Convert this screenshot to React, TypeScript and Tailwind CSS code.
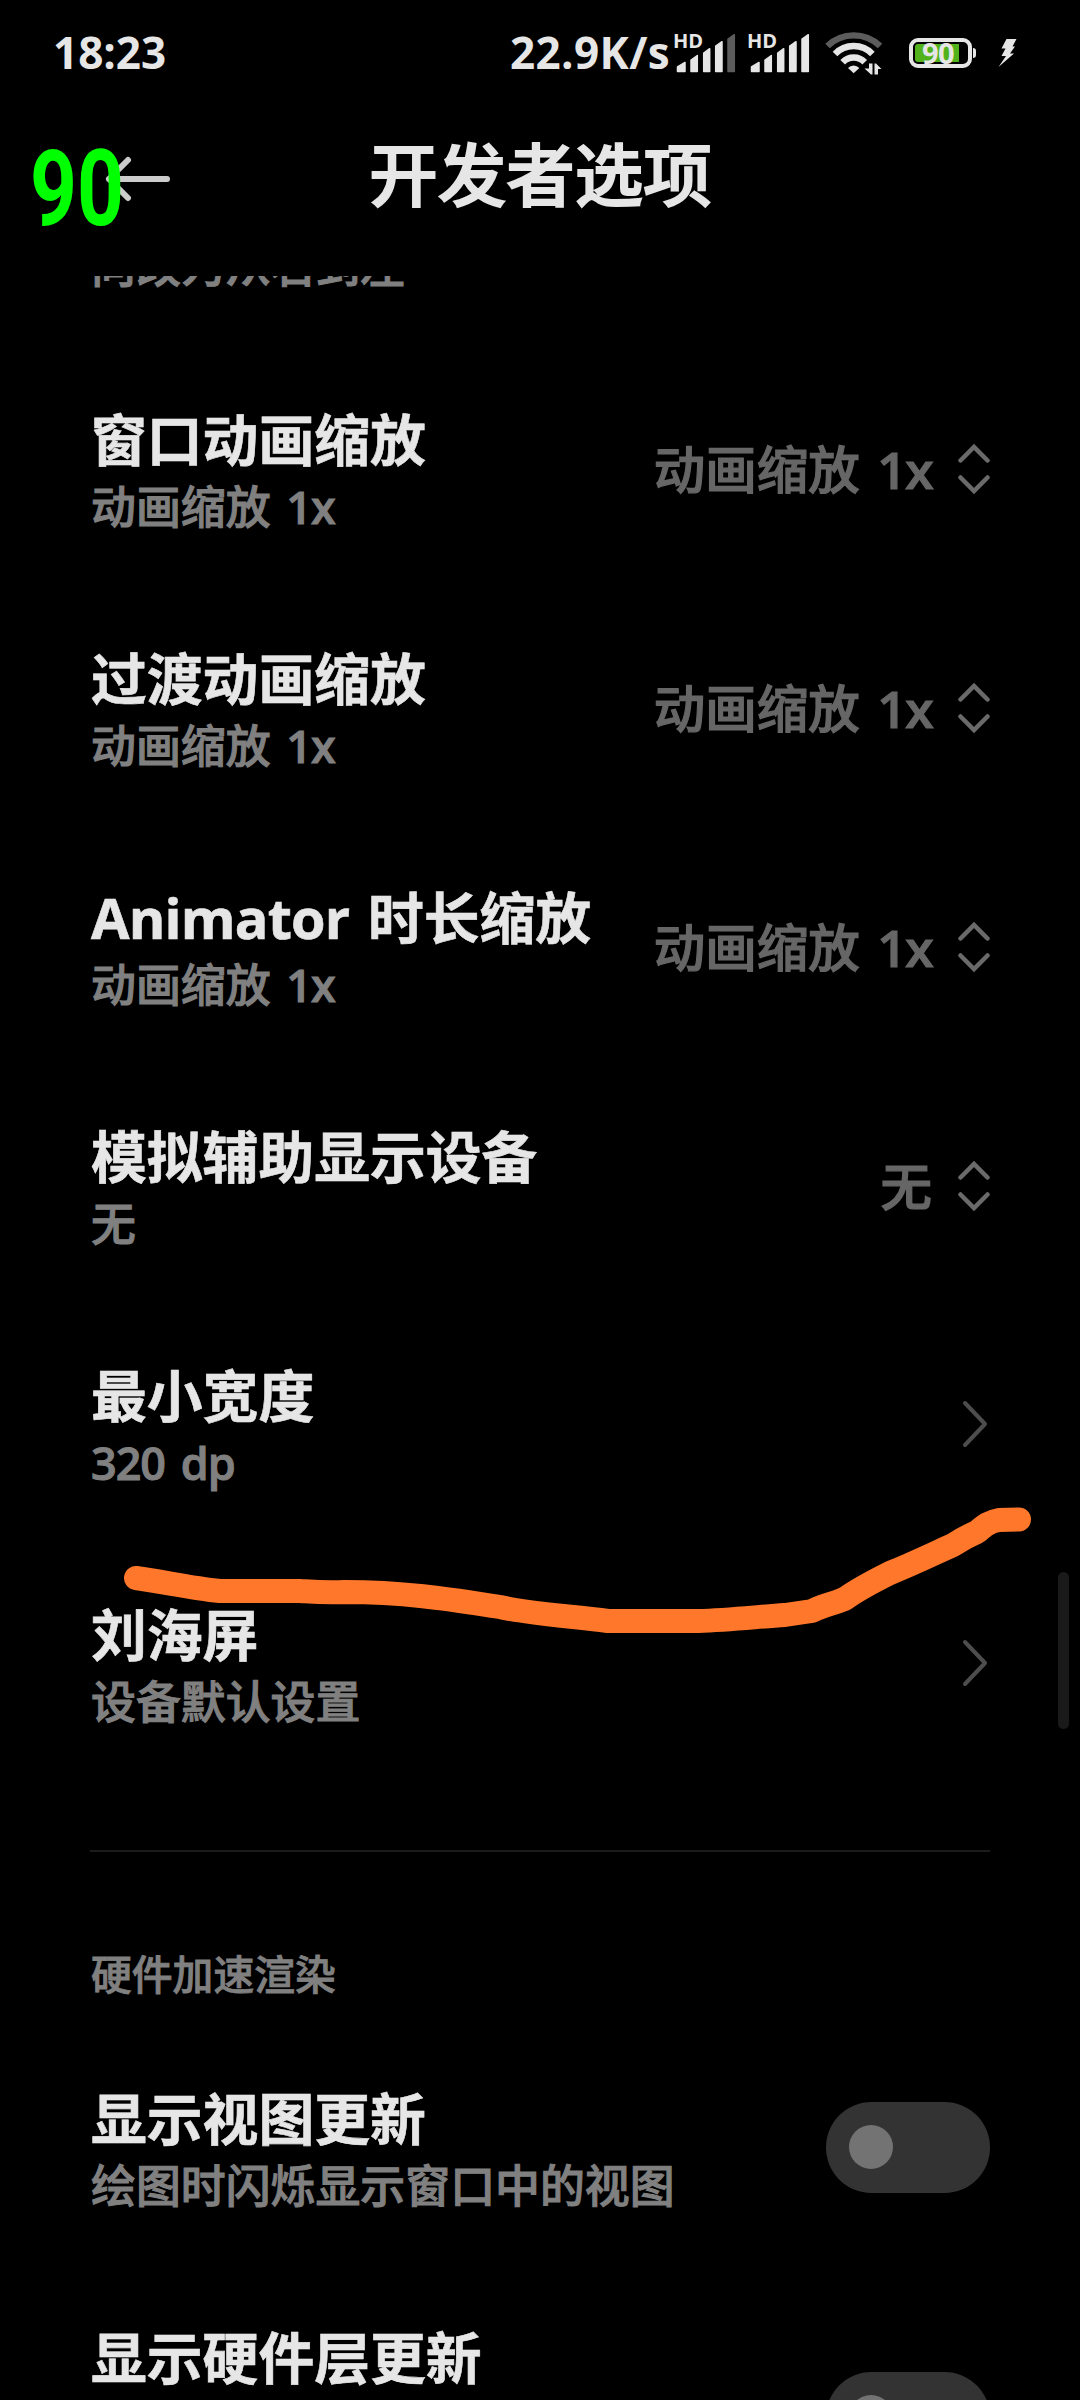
import React from 'react';

type Accessory = 'select' | 'arrow' | 'switch';

interface SettingItem {
  title: string;
  summary?: string;
  accessory: Accessory;
  value?: string;
}

const ANIMATION_ITEMS: SettingItem[] = [
  { title: '窗口动画缩放', summary: '动画缩放 1x', accessory: 'select', value: '动画缩放 1x' },
  { title: '过渡动画缩放', summary: '动画缩放 1x', accessory: 'select', value: '动画缩放 1x' },
  { title: 'Animator 时长缩放', summary: '动画缩放 1x', accessory: 'select', value: '动画缩放 1x' },
  { title: '模拟辅助显示设备', summary: '无', accessory: 'select', value: '无' },
  { title: '最小宽度', summary: '320 dp', accessory: 'arrow' },
  { title: '刘海屏', summary: '设备默认设置', accessory: 'arrow' },
];

const RENDER_ITEMS: SettingItem[] = [
  { title: '显示视图更新', summary: '绘图时闪烁显示窗口中的视图', accessory: 'switch' },
  { title: '显示硬件层更新', accessory: 'switch' },
];

// Latin words and numbers get their own weight and tracking next to the Chinese glyphs
const MixedText: React.FC<{ text: string; latinClass: string }> = ({ text, latinClass }) => (
  <>
    {text.split(/([A-Za-z0-9]+)/).map((part, i) =>
      i % 2 === 1 ? <span key={i} className={latinClass}>{part}</span> : part
    )}
  </>
);

const UpDownIcon: React.FC = () => (
  <svg width="32" height="52" viewBox="0 0 32 52" fill="none" stroke="#6a6a6a" strokeWidth="4.5" strokeLinecap="round">
    <path d="M2.5 17.5 L16 4 L29.5 17.5 M2.5 34.5 L16 48 L29.5 34.5" />
  </svg>
);

const ArrowIcon: React.FC = () => (
  <svg width="28" height="48" viewBox="0 0 28 48" fill="none" stroke="#4d4d4d" strokeWidth="4" strokeLinecap="round" strokeLinejoin="round">
    <path d="M3 3 L23 24 L3 45" />
  </svg>
);

const Switch: React.FC = () => (
  <div className="flex h-[91px] w-[164px] items-center rounded-full bg-[#333333] pl-[23px]">
    <div className="h-11 w-11 rounded-full bg-[#737373]" />
  </div>
);

const SettingRow: React.FC<{ item: SettingItem }> = ({ item }) => (
  <div className={`flex shrink-0 items-center justify-between ${item.summary ? 'h-[239px]' : 'h-[301px]'}`}>
    <div>
      <div className="h-[72px] pl-px text-[55.8px] leading-[70px] font-bold text-[#e6e6e6] [word-spacing:4px] [-webkit-text-stroke:0.6px_#e6e6e6]">
        <MixedText text={item.title} latinClass="tracking-[-0.8px]" />
      </div>
      {/* An item without a one-line summary keeps room for two lines */}
      <div
        className={`pl-px text-[44.9px] leading-[62px] font-medium text-[#808080] [word-spacing:4px] [-webkit-text-stroke:1px_#808080] ${item.summary ? 'h-[60px]' : 'h-[122px]'}`}
      >
        <MixedText text={item.summary ?? ''} latinClass="font-semibold tracking-[-1px]" />
      </div>
    </div>
    {item.accessory === 'select' && (
      <div className="flex items-center gap-[26px] pb-[2px]">
        <span className="text-[51.5px] leading-[70px] font-medium text-[#666666] [word-spacing:4px] [-webkit-text-stroke:1.2px_#666666]">
          <MixedText text={item.value ?? ''} latinClass="font-semibold tracking-[-1.5px]" />
        </span>
        <UpDownIcon />
      </div>
    )}
    {item.accessory === 'arrow' && (
      <div className="pb-[3px]">
        <ArrowIcon />
      </div>
    )}
    {item.accessory === 'switch' && (
      <div className="pb-[3px]">
        <Switch />
      </div>
    )}
  </div>
);

const SignalIcon: React.FC<{ lastColor: string }> = ({ lastColor }) => (
  <div className="relative h-[48px] w-[62px]">
    <span className="absolute top-0 -left-[1px] text-[20px] leading-[24px] font-bold">HD</span>
    <svg className="absolute top-0 left-0" width="62" height="48" viewBox="0 0 62 48" fill="#e6e6e6" stroke="#e6e6e6" strokeWidth="1.5" strokeLinejoin="round">
      <path d="M3.5 42.5 V38 L11 33.5 V42.5 Z" />
      <path d="M17 42.5 V31 L23.3 26.5 V42.5 Z" />
      <path d="M29.7 42.5 V24 L35.7 19.7 V42.5 Z" />
      <path d="M41.7 42.5 V17 L48 12.7 V42.5 Z" />
      <path d="M54 42.5 V10 L60.3 5.7 V42.5 Z" fill={lastColor} stroke={lastColor} />
    </svg>
  </div>
);

const WifiIcon: React.FC = () => (
  <svg width="57" height="50" viewBox="0 0 57 50" fill="none" stroke="#e6e6e6" strokeWidth="6.4">
    <path d="M2.5 18 A37.7 37.7 0 0 1 55 18" stroke="#5c5c5c" />
    <path d="M10 26 A26 26 0 0 1 47.4 26" />
    <path d="M17.7 34.3 A15 15 0 0 1 39.7 34.3" />
    <path d="M28.7 45.3 L23 40 A7.5 7.5 0 0 1 34.3 40 Z" fill="#e6e6e6" stroke="none" />
    <path d="M47.5 35.5 V46.5 H46 L39.5 40.5 H44 V35.5 Z M49.5 46.5 V35.5 H51 L56.5 41 H53 V46.5 Z" fill="#e6e6e6" stroke="none" />
  </svg>
);

const BatteryIcon: React.FC = () => (
  <div className="flex items-center gap-px">
    <div className="relative h-[30px] w-[63px] rounded-[9px] border-4 border-[#e6e6e6] pt-[2px] pl-[2px]">
      <div className="h-[18px] w-[44px] rounded-l-[3px] bg-[#52b21c]" />
      <span className="absolute -top-[4px] left-[9px] text-[29px] leading-[30px] font-bold tracking-[-0.5px]">90</span>
    </div>
    <div className="h-[10px] w-[3px] rounded-r-sm bg-[#e6e6e6]" />
  </div>
);

const StatusBar: React.FC = () => (
  <div className="flex h-[106px] shrink-0 items-center pr-[63px] pl-[53px] text-[#e6e6e6]">
    <span className="pb-[2px] text-[44px] font-bold">18:23</span>
    <div className="ml-auto flex items-center">
      <span className="pb-[2px] text-[44px] font-bold tracking-[0.4px]">22.9K/s</span>
      <div className="ml-1 flex gap-[12px]">
        <SignalIcon lastColor="#5c5c5c" />
        <SignalIcon lastColor="#e6e6e6" />
      </div>
      <div className="ml-[15px]"><WifiIcon /></div>
      <div className="ml-[27px]"><BatteryIcon /></div>
      <svg className="ml-[22px]" width="19" height="28" viewBox="0 0 19 28" fill="#e6e6e6">
        <path d="M8.5 0 H18.5 L14.5 7.5 H17 L12 14.5 H16 L0.5 28 L8 17 H3.5 L7.5 9.5 H3.5 Z" />
      </svg>
    </div>
  </div>
);

const App: React.FC = () => (
  <div
    lang="zh-CN"
    className="relative flex h-[2400px] w-[1080px] flex-col overflow-hidden bg-black font-['Open_Sans','Noto_Sans_CJK_SC',sans-serif]"
  >
    <StatusBar />

    {/* Header */}
    <header className="relative flex h-[170px] shrink-0 items-center justify-center pb-[33px]">
      <svg className="absolute top-[50px] left-[104px]" width="68" height="46" viewBox="0 0 68 46" fill="none" stroke="#cccccc" strokeWidth="6" strokeLinecap="round" strokeLinejoin="round">
        <path d="M24 4 L5 23 L24 42 M5 23 H63" />
      </svg>
      <h1 className="pl-px text-[68.5px] leading-[90px] font-medium text-[#e6e6e6] [-webkit-text-stroke:1.8px_#e6e6e6]">开发者选项</h1>
      {/* Frame rate overlay */}
      <span className="absolute top-[31px] left-[30px] origin-left scale-x-[0.78] font-[Roboto] text-[105px] leading-[105px] font-bold text-[#00ff00]">90</span>
    </header>

    {/* Settings list */}
    <main className="flex flex-1 flex-col overflow-hidden px-[90px]">
      <div className="flex h-[74px] shrink-0 items-start">
        <span className="-mt-[41px] pl-px text-[44.9px] leading-[62px] font-medium text-[#808080] [-webkit-text-stroke:1px_#808080]">向改为从右到左</span>
      </div>
      {ANIMATION_ITEMS.map(item => (
        <SettingRow key={item.title} item={item} />
      ))}
      <div className="mt-[66px] h-[2px] shrink-0 bg-[#1c1c1c]" />
      <div className="mt-[95px] mb-[28px] h-[54px] shrink-0 pl-px text-[40.8px] leading-[54px] font-medium text-[#808080] [-webkit-text-stroke:0.8px_#808080]">硬件加速渲染</div>
      {RENDER_ITEMS.map(item => (
        <SettingRow key={item.title} item={item} />
      ))}
    </main>

    {/* Scroll thumb */}
    <div className="absolute top-[1572px] right-[11px] h-[157px] w-[11px] rounded-full bg-[#1a1a1a]" />

    {/* Marker stroke */}
    <svg className="absolute top-[1500px] left-[120px]" width="920" height="150" viewBox="120 1500 920 150" fill="none" stroke="#ff772a" strokeWidth="24" strokeLinecap="round" strokeLinejoin="round">
      <path d="M136 1578 C165 1582 190 1588 220 1591 H300 C315 1592 325 1593 345 1592 C410 1592 460 1601 500 1607 C530 1614 570 1616 608 1621 H698 C730 1620 755 1617 785 1615 L812 1611 C825 1604 838 1603 846 1598 C860 1588 872 1582 890 1573 C915 1563 935 1553 953 1545 C962 1539 970 1535 977 1532 C984 1526 988 1522 999 1520 L1019 1519.5" />
    </svg>
  </div>
);

export default App;
